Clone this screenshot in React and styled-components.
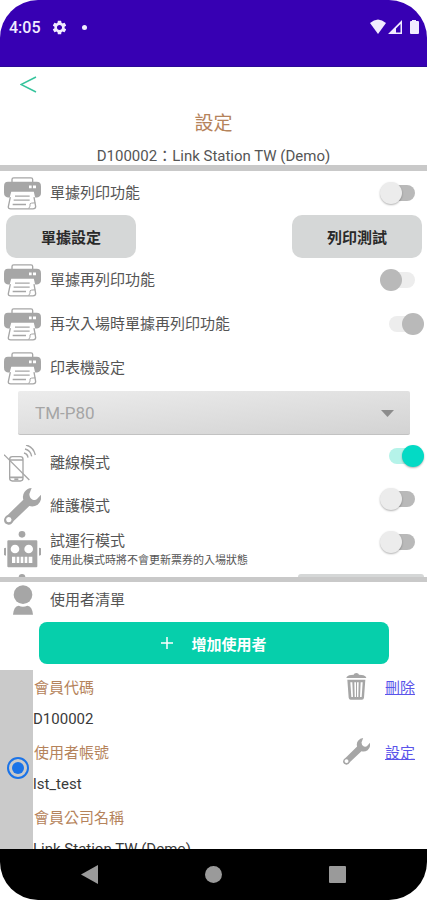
// src/App.jsx

import React, { useState } from 'react';
import styled, { ThemeProvider, createGlobalStyle } from 'styled-components';
import { MdSettings } from 'react-icons/md';

const theme = {
  colors: {
    statusBar: '#3700b3',
    accent: '#06cfab',
    switchOn: '#03dac5',
    heading: '#b5835b',
    text: '#555555',
    strong: '#3a3a3a',
    icon: '#a6a6a6',
    divider: '#c9c9c9',
    button: '#d5d7d7',
    link: '#5a54ea',
    radio: '#1a73e8',
  },
};

const GlobalStyle = createGlobalStyle`
  * {
    box-sizing: border-box;
  }

  body {
    margin: 0;
    background: #ffffff;
    font-family: Roboto, 'Noto Sans CJK TC', sans-serif;
    font-size: 15px;
    color: ${props => props.theme.colors.text};
  }

  button, select, input {
    font-family: inherit;
    margin: 0;
  }
`;

const Screen = styled.div`
  display: flex;
  flex-direction: column;
  height: 100vh;
  overflow: hidden;
  border-radius: 38px;
  background: #ffffff;
`;

const StatusBar = styled.div`
  display: flex;
  align-items: center;
  justify-content: space-between;
  height: 67px;
  flex-shrink: 0;
  padding: 0 8px 12px 9px;
  background: ${props => props.theme.colors.statusBar};
  border-bottom: 1px solid #2a0a96;
  color: #f1ecff;
`;

const StatusGroup = styled.div`
  display: flex;
  align-items: center;
  gap: 10px;
`;

const Clock = styled.span`
  font-size: 16px;
  font-weight: 500;
`;

const Dot = styled.span`
  width: 5px;
  height: 5px;
  margin-left: 4px;
  border-radius: 50%;
  background: #f1ecff;
`;

const Header = styled.header`
  display: flex;
  flex-direction: column;
  flex-shrink: 0;
  height: 98px;
  text-align: center;
`;

const BackButton = styled.button`
  display: flex;
  align-items: center;
  align-self: flex-start;
  height: 34px;
  padding: 0 20px;
  border: none;
  background: none;
  cursor: pointer;
`;

const Title = styled.h1`
  margin: 0;
  font-size: 19px;
  font-weight: 400;
  line-height: 46px;
  color: ${props => props.theme.colors.heading};
`;

const Subtitle = styled.p`
  margin: 0;
  line-height: 18px;
`;

const Divider = styled.div`
  height: ${props => props.$height}px;
  flex-shrink: 0;
  background: ${props => props.theme.colors.divider};
`;

const SettingsPanel = styled.main`
  flex: 1;
  min-height: 0;
  overflow-y: auto;
  scrollbar-width: none;
`;

const Row = styled.div`
  display: flex;
  align-items: center;
  height: 44px;
  padding: 0 3px 0 4px;
`;

const ModeList = styled.div`
  ${Row} {
    align-items: flex-start;
    height: 43px;
    padding-top: 4px;
  }
`;

const FooterRow = styled.div`
  display: flex;
  align-items: flex-start;
  justify-content: space-between;
  padding: 4px 3px 0 4px;
`;

const IconSlot = styled.span`
  display: flex;
  justify-content: center;
  width: 37px;
  margin-right: 9px;
  flex-shrink: 0;
`;

const RowLabel = styled.label`
  display: flex;
  flex-direction: column;
  flex: 1;
  line-height: ${props => (props.$tight ? 20 : 36)}px;
`;

const Hint = styled.small`
  font-size: 11px;
  line-height: 20px;
`;

const Switch = styled.input`
  appearance: none;
  position: relative;
  width: 44px;
  height: 22px;
  flex-shrink: 0;
  cursor: pointer;

  &::before {
    content: '';
    position: absolute;
    inset: 3px 9px;
    border-radius: 8px;
    background: #b9b9b9;
  }

  &::after {
    content: '';
    position: absolute;
    top: 0;
    left: 0;
    width: 22px;
    height: 22px;
    border-radius: 50%;
    background: #ececec;
    box-shadow: 0 1px 2px rgba(0, 0, 0, 0.3);
  }

  &:checked::before {
    background: #b5f3e9;
  }

  &:checked::after {
    left: 22px;
    background: ${props => props.theme.colors.switchOn};
  }

  &:disabled::before {
    background: #ededed;
  }

  &:disabled::after {
    background: #b9b9b9;
    box-shadow: none;
  }
`;

const ButtonRow = styled.div`
  display: flex;
  justify-content: space-between;
  padding: 0 5px 0 6px;
`;

const GreyButton = styled.button`
  width: 130px;
  height: 43px;
  border: none;
  border-radius: 10px;
  background: ${props => props.theme.colors.button};
  color: #2a2a2a;
  font-size: 15px;
  font-weight: 700;
  cursor: pointer;
`;

const FooterButton = styled(GreyButton)`
  width: 126px;
  border-radius: 3px;
`;

const SelectWrap = styled.div`
  display: grid;
  align-items: center;
  margin: 1px 17px 6px 18px;

  > * {
    grid-area: 1 / 1;
  }

  > svg {
    justify-self: end;
    margin-right: 16px;
    pointer-events: none;
  }
`;

const Select = styled.select`
  appearance: none;
  width: 100%;
  height: 44px;
  padding: 0 36px 0 17px;
  border: none;
  border-bottom: 1px solid #c2c2c2;
  border-radius: 2px;
  background: linear-gradient(175deg, #ececec, #d3d3d3);
  color: #a5a5a5;
  font-size: 17px;
  opacity: 1;
`;

const UserPanel = styled.section`
  flex-shrink: 0;
`;

const UserHeading = styled.div`
  display: flex;
  align-items: center;
  height: 36px;
  padding-left: 4px;
`;

const PanelTitle = styled.h2`
  margin: 0;
  font-size: 15px;
  font-weight: 400;
  line-height: 20px;
`;

const AddButton = styled.button`
  display: flex;
  align-items: center;
  justify-content: center;
  gap: 18px;
  width: calc(100% - 77px);
  height: 42px;
  margin: 4px 38px 6px 39px;
  border: none;
  border-radius: 8px;
  background: ${props => props.theme.colors.accent};
  color: #ffffff;
  font-size: 15px;
  font-weight: 700;
  cursor: pointer;
`;

const UserList = styled.div`
  max-height: 179px;
  overflow-y: auto;
  scrollbar-width: none;
`;

const UserCard = styled.div`
  display: flex;
`;

const RadioColumn = styled.div`
  display: flex;
  align-items: center;
  justify-content: center;
  width: 33px;
  padding-left: 2px;
  flex-shrink: 0;
  background: #cacaca;
`;

const Radio = styled.input`
  appearance: none;
  width: 22px;
  height: 22px;
  border: 2px solid ${props => props.theme.colors.radio};
  border-radius: 50%;
  background: ${props => props.theme.colors.radio};
  background-clip: content-box;
  padding: 3px;
`;

const UserFields = styled.div`
  flex: 1;
  padding-right: 11px;
`;

const FieldLine = styled.div`
  display: flex;
  align-items: center;
  height: ${props => (props.$value ? 32 : 33)}px;
`;

const FieldName = styled.span`
  flex: 1;
  padding-left: 1px;
  color: ${props => props.theme.colors.heading};
`;

const FieldValue = styled.span`
  color: ${props => props.theme.colors.strong};
`;

const ActionLink = styled.a`
  width: 31px;
  margin-left: 15px;
  color: ${props => props.theme.colors.link};
  text-decoration: underline;
`;

const NavBar = styled.nav`
  display: flex;
  align-items: center;
  justify-content: space-between;
  height: 51px;
  flex-shrink: 0;
  padding: 0 81px;
  background: #000000;
`;

const NavButton = styled.button`
  display: flex;
  padding: 0;
  border: none;
  background: none;
  cursor: pointer;
`;

const gray = theme.colors.icon;

const PrinterIcon = () => (
  <svg width="37" height="33" viewBox="0 0 111 98" fill="none" stroke={gray} strokeWidth="4">
    <path d="M24 17V7q0-5 5-5h52q5 0 5 5v10" />
    <path d="M12 14h86q13 0 13 13v20q0 13-12 14H12Q0 60 0 47V27q0-13 12-13z" fill={gray} stroke="none" />
    <path d="M75 25h8v8h-8zM87 25h9v8h-9z" fill="#ffffff" stroke="none" />
    <path d="M24 47h63l7 30-16 18H20q-8 0-7-7z" fill="#ffffff" stroke="#ffffff" strokeWidth="6" />
    <path d="M19 60l-6 28q-1 7 7 7h67q8 0 8-7l-5-28" />
    <path d="M94 77q-14 0-16 3 2 7-4 14" strokeWidth="3" />
    <path d="M33 57h44M29 69h48M26 82h40" />
  </svg>
);

const OfflineIcon = () => (
  <svg width="37" height="37" viewBox="0 0 111 111" fill="none" stroke={gray} strokeWidth="4">
    <rect x="17" y="35" width="40" height="73" rx="8" />
    <path d="M17 45h40M17 97h40M31 103h12" strokeWidth="5" />
    <path d="M0 29l76 76" />
    <path d="M60 24q11 3 12 14M63 12q17 4 20 22M66 0q22 5 28 30" />
  </svg>
);

const WrenchIcon = ({ size = 37 }) => (
  <svg width={size} height={size} viewBox="0 0 111 111" fill={gray}>
    <path
      fillRule="evenodd"
      d="M83 0L76 18q0 12 10 17 9 2 13-2l12-13q3 20-10 30-12 8-25 4L29 99q-6 12-16 11Q0 108 0 96q1-10 12-16l46-45q-4-13 4-24Q70 1 83 0zM14 87a8 8 0 1 0 1 16 8 8 0 0 0-1-16z"
    />
  </svg>
);

const RobotIcon = () => (
  <svg width="37" height="37" viewBox="0 0 111 111" fill={gray}>
    <circle cx="54" cy="10" r="10" />
    <path d="M10 31q0-3 3-3h84q3 0 3 3v75q0 3-3 3H13q-3 0-3-3zM0 52l6-2v24l-6-2zM105 50l6 2v20l-6 2z" />
    <circle cx="33" cy="54" r="13" fill="#ffffff" />
    <circle cx="74" cy="54" r="13" fill="#ffffff" />
    <path d="M24 77h10v19H24zM38 77h8v19h-8zM50 77h8v19h-8zM62 77h8v19h-8zM74 77h11v19H74z" fill="#ffffff" />
  </svg>
);

const UserIcon = () => (
  <svg width="20" height="30" viewBox="0 0 60 90" fill={gray}>
    <circle cx="30" cy="29" r="28" />
    <path d="M0 89q2-25 17-27 13 6 26 0 15 2 17 27z" />
  </svg>
);

const TrashIcon = () => (
  <svg width="24" height="27" viewBox="0 0 72 81" fill={gray}>
    <path d="M1 15q2-8 14-9l8-1q1-5 8-5t8 5l8 1q12 1 14 9z" />
    <path fillRule="evenodd" d="M4 20h54l-4 54q-1 6-6 6H14q-5 0-6-6zM13 28l3 44h5l-2-44zM25 28l1 44h4V28zM33 28v44h4l1-44zM44 28l-2 44h5l3-44z" />
  </svg>
);

const StatusIcons = () => (
  <svg width="49" height="16" viewBox="0 0 49 16" fill="#f1ecff">
    <path d="M0 4q8-7 16 0L8 15z" />
    <path fillRule="evenodd" d="M18 15L32 1v14zM26 9.500v4h4.500V5z" />
    <path d="M42 1h4v1h2q1 0 1 1v11q0 1-1 1h-7q-1 0-1-1V3q0-1 1-1h1z" />
  </svg>
);

const printerSettings = [
  { id: 'reprint', label: '單據再列印功能', disabled: true, checked: false },
  { id: 'reentry', label: '再次入場時單據再列印功能', disabled: true, checked: true },
];

const modeSettings = [
  { id: 'offline', label: '離線模式', icon: <OfflineIcon />, checked: true },
  { id: 'maintain', label: '維護模式', icon: <WrenchIcon />, checked: false },
  {
    id: 'trial',
    label: '試運行模式',
    hint: '使用此模式時將不會更新票券的入場狀態',
    icon: <RobotIcon />,
    checked: false,
  },
];

const userFields = [
  { name: '會員代碼', value: 'D100002', action: '刪除', icon: <TrashIcon /> },
  { name: '使用者帳號', value: 'lst_test', action: '設定', icon: <WrenchIcon size={27} /> },
  { name: '會員公司名稱', value: 'Link Station TW (Demo)' },
];

const SettingRow = ({ id, icon, label, hint, checked, disabled }) => {
  const [isOn, setIsOn] = useState(checked);

  return (
    <Row>
      <IconSlot>{icon}</IconSlot>
      <RowLabel htmlFor={id} $tight={Boolean(hint)}>
        {label}
        {hint && <Hint>{hint}</Hint>}
      </RowLabel>
      <Switch
        id={id}
        type="checkbox"
        role="switch"
        checked={isOn}
        disabled={disabled}
        onChange={() => setIsOn(!isOn)}
      />
    </Row>
  );
};

const App = () => (
  <ThemeProvider theme={theme}>
    <GlobalStyle />
    <Screen>
      <StatusBar>
        <StatusGroup>
          <Clock>4:05</Clock>
          <MdSettings size={17} />
          <Dot />
        </StatusGroup>
        <StatusIcons />
      </StatusBar>

      <Header>
        <BackButton aria-label="返回">
          <svg width="17" height="17" viewBox="0 0 17 17" fill="none" stroke="#36c49c" strokeWidth="1.500">
            <path d="M16 1L1 8.500 16 16" />
          </svg>
        </BackButton>
        <Title>設定</Title>
        <Subtitle>D100002：Link Station TW (Demo)</Subtitle>
      </Header>
      <Divider $height={6} />

      <SettingsPanel>
        <SettingRow id="print" icon={<PrinterIcon />} label="單據列印功能" checked={false} />
        <ButtonRow>
          <GreyButton>單據設定</GreyButton>
          <GreyButton>列印測試</GreyButton>
        </ButtonRow>
        {printerSettings.map((item) => (
          <SettingRow key={item.id} icon={<PrinterIcon />} {...item} />
        ))}
        <Row>
          <IconSlot><PrinterIcon /></IconSlot>
          <RowLabel htmlFor="printer">印表機設定</RowLabel>
        </Row>
        <SelectWrap>
          <Select id="printer" disabled defaultValue="TM-P80">
            <option>TM-P80</option>
          </Select>
          <svg width="13" height="7" viewBox="0 0 13 7" fill="#8c8c8c">
            <path d="M0 0h13L6.500 7z" />
          </svg>
        </SelectWrap>
        <ModeList>
          {modeSettings.map((item) => (
            <SettingRow key={item.id} {...item} />
          ))}
        </ModeList>
        <FooterRow>
          <IconSlot><RobotIcon /></IconSlot>
          <FooterButton aria-label="模式設定" />
        </FooterRow>
      </SettingsPanel>
      <Divider $height={5} />

      <UserPanel>
        <UserHeading>
          <IconSlot><UserIcon /></IconSlot>
          <PanelTitle>使用者清單</PanelTitle>
        </UserHeading>
        <AddButton>
          <svg width="12" height="12" viewBox="0 0 12 12" stroke="#ffffff" strokeWidth="1.500">
            <path d="M6 0v12M0 6h12" />
          </svg>
          增加使用者
        </AddButton>
        <UserList>
          <UserCard>
            <RadioColumn>
              <Radio type="radio" name="user" aria-label="lst_test" defaultChecked />
            </RadioColumn>
            <UserFields>
              {userFields.map((field) => (
                <React.Fragment key={field.name}>
                  <FieldLine>
                    <FieldName>{field.name}</FieldName>
                    {field.icon}
                    {field.action && <ActionLink href="#">{field.action}</ActionLink>}
                  </FieldLine>
                  <FieldLine $value>
                    <FieldValue>{field.value}</FieldValue>
                  </FieldLine>
                </React.Fragment>
              ))}
            </UserFields>
          </UserCard>
        </UserList>
      </UserPanel>

      <NavBar>
        <NavButton aria-label="返回上一頁">
          <svg width="17" height="19" viewBox="0 0 17 19" fill="#9a9a9a"><path d="M0 9.500L17 0v19z" /></svg>
        </NavButton>
        <NavButton aria-label="主畫面">
          <svg width="17" height="17" viewBox="0 0 17 17" fill="#9a9a9a"><circle cx="8.500" cy="8.500" r="8.500" /></svg>
        </NavButton>
        <NavButton aria-label="最近使用">
          <svg width="17" height="17" viewBox="0 0 17 17" fill="#9a9a9a"><rect width="17" height="17" rx="1" /></svg>
        </NavButton>
      </NavBar>
    </Screen>
  </ThemeProvider>
);

export default App;
